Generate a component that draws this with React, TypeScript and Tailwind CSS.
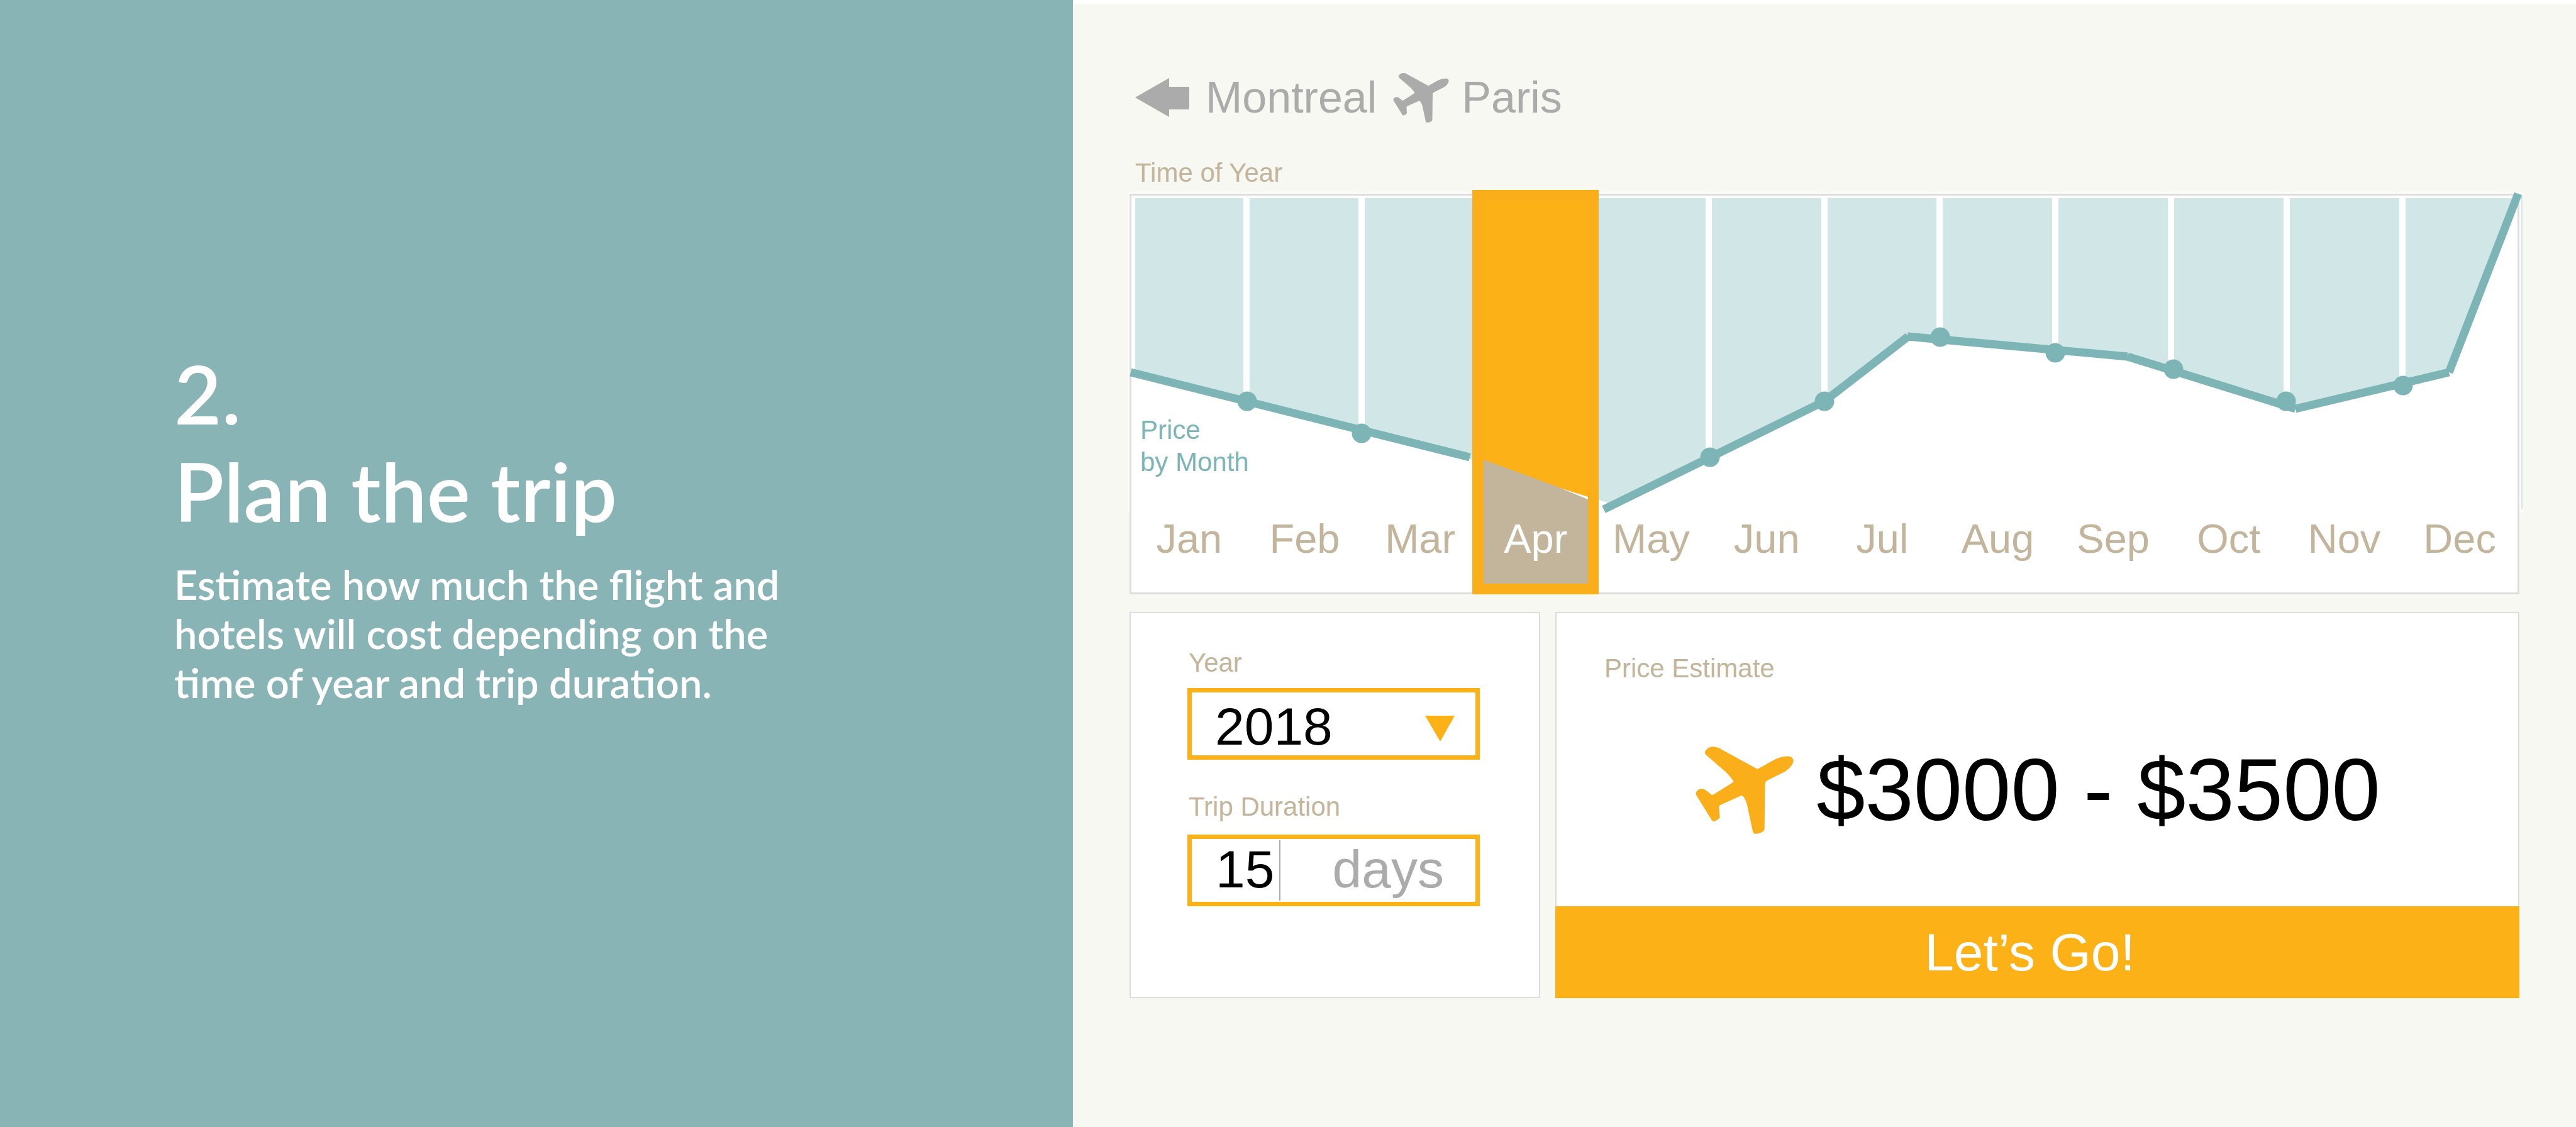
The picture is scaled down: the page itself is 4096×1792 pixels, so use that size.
const MONTHS = ["Jan", "Feb", "Mar", "Apr", "May", "Jun", "Jul", "Aug", "Sep", "Oct", "Nov", "Dec"];
const SELECTED = "Apr";

const DIVIDERS = [185, 368, 920, 1104, 1287, 1471, 1655, 1839, 2023];

const DOTS = [
  [186, 329],
  [368, 380],
  [922, 418],
  [1104, 329],
  [1288, 227],
  [1471, 252],
  [1659, 278],
  [1838, 329],
  [2024, 304],
];

const SEGMENTS = [
  "M1 283L540 418",
  "M753 501L1104 329L1237 226",
  "M1236 226L1586 258",
  "M1586 258L1853 341",
  "M1853 341L2097 283",
  "M2097 283L2207 -1",
];

function Plane({ className }: { className: string }) {
  return (
    <svg viewBox="65 63 543 485" className={className} fill="currentColor" aria-hidden="true">
      <path d="M116 97C118 85 135 66 155 64C170 62 183 66 195 72L400 184Q408 190 416 184L500 137C530 121 555 118 580 117C600 118 609 132 607 147C602 165 585 187 560 203L465 250Q450 258 450 272L447 520C446 532 432 541 410 546C392 549 385 545 382 535L350 385C343 362 335 345 326 337Q321 333 312 338L200 388Q194 391 195 400L199 455C198 464 185 472 167 478Q158 479 155 473L68 332C62 318 72 304 88 299C100 296 115 300 125 308L150 328Q157 335 166 328L270 263Q277 259 273 253C262 237 245 216 230 203L125 112Q116 104 116 97Z" />
    </svg>
  );
}

function PriceChart() {
  return (
    <svg viewBox="2 2 2204 509" className="block w-full overflow-visible" role="img" aria-label="Price by month">
      {/* backing sheet that peeks out either side of the frame */}
      <path d="M-3 -3H2215V506H2209V-1H-1V506H-3Z" fill="#ffffff" />
      <path d="M2213 1V501" stroke="#d1e7e7" strokeWidth="2" />
      {/* area above the price line */}
      <path
        d="M8 6H2204L2097 283L1853 341L1586 258L1236 226L1104 329L759 498V490L745 486L540 421L8 285Z"
        fill="#d1e7e7"
      />
      {DIVIDERS.map((x, i) => (
        <path key={x} d={`M${x} 4V${DOTS[i][1]}`} stroke="#ffffff" strokeWidth="10" />
      ))}
      {SEGMENTS.map((d) => (
        <path key={d} d={d} fill="none" stroke="#7db5b7" strokeWidth="13" />
      ))}
      {DOTS.map(([x, y]) => (
        <circle key={x} cx={x} cy={y} r="15.5" fill="#7db5b7" />
      ))}
      {/* selected month */}
      <rect x="544" y="-7" width="201" height="643" fill="#faaf1a" />
      <path d="M562 10H728V481L674 464L562 422Z" fill="#fcb216" />
      <path d="M674 464L728 481V486Z" fill="#ffffff" />
      <path d="M562 422L674 463L728 485V619H562Z" fill="#c2b59b" />
    </svg>
  );
}

export default function App() {
  return (
    <div className="flex min-h-screen bg-[#f6f8f1] font-['Liberation_Sans',Arial,sans-serif]">
      <section className="w-[41.65%] shrink-0 bg-[#89b4b6] pt-[548px] pl-[277px] font-[Lato,sans-serif] font-semibold text-white">
        <h1 className="text-[130px] leading-[155px]">
          2.
          <br />
          Plan the trip
        </h1>
        <p className="mt-8 text-[65px] leading-[78px]">
          Estimate how much the flight and
          <br />
          hotels will cost depending on the
          <br />
          time of year and trip duration.
        </p>
      </section>

      <main className="flex-1 border-t-[6px] border-white px-[90px] pt-[109px]">
        <header className="flex items-center gap-5 pl-[9px] text-[70px] leading-[80px] text-[#ababab]">
          <button type="button" aria-label="Back">
            <svg viewBox="0 0 86 62" className="block h-[62px] w-[86px]" fill="currentColor" aria-hidden="true">
              <path d="M0 31L54 0V14H86V50H54V62Z" />
            </svg>
          </button>
          <span className="ml-1.5">Montreal</span>
          <Plane className="ml-1.5 h-[79px] w-[89px]" />
          <span>Paris</span>
        </header>

        <h2 className="mt-14 pl-[9px] text-[42px] leading-[48px] text-[#c2b59b]">Time of Year</h2>

        <section className="relative mt-[9px] border-[3px] border-[#dddddd] bg-white">
          <PriceChart />
          <p className="absolute top-[347px] left-[14px] text-[42px] leading-[51px] text-[#7db5b7]">
            Price
            <br />
            by Month
          </p>
          <div className="relative grid grid-cols-12 pb-12 text-[65px] leading-[74px] text-[#c2b59b]">
            {MONTHS.map((m) => (
              <button
                key={m}
                type="button"
                aria-pressed={m === SELECTED}
                className={m === SELECTED ? "text-center text-white" : "text-center"}
              >
                {m}
              </button>
            ))}
          </div>
        </section>

        <div className="mt-7 grid grid-cols-[653fr_1533fr] gap-6">
          <form className="flex flex-col border-2 border-[#dddddd] bg-white pt-[55px] pr-[94px] pb-36 pl-[90px]">
            <label htmlFor="year" className="pl-0.5 text-[42px] leading-[48px] text-[#c2b59b]">
              Year
            </label>
            <div className="relative mt-4">
              <select
                id="year"
                defaultValue="2018"
                className="block h-[114px] w-full appearance-none rounded-none border-[7px] border-[#fcb216] bg-white pt-2 pl-[37px] text-[84px] leading-[90px] text-black"
              >
                <option>2018</option>
                <option>2019</option>
              </select>
              <svg
                viewBox="0 0 47 41"
                className="pointer-events-none absolute top-[44px] right-[40px] h-[41px] w-[47px]"
                fill="#fcb216"
                aria-hidden="true"
              >
                <path d="M0 0H47L24 41Z" />
              </svg>
            </div>
            <label htmlFor="duration" className="mt-[51px] pl-0.5 text-[42px] leading-[48px] text-[#c2b59b]">
              Trip Duration
            </label>
            <div className="mt-5 flex h-[114px] items-center border-[7px] border-[#fcb216] pr-[50px] text-[84px] leading-[96px]">
              <input
                id="duration"
                type="text"
                defaultValue="15"
                className="h-[96px] w-[139px] pb-1 pl-[38px] text-black"
              />
              <span className="h-[96px] w-[2px] bg-[#ababab]" />
              <span className="ml-auto pb-1 text-[#ababab]">days</span>
            </div>
          </form>

          <section className="flex flex-col">
            <div className="flex-1 border-2 border-b-0 border-[#dddddd] bg-white pt-16">
              <h2 className="pl-[76px] text-[42px] leading-[48px] text-[#c2b59b]">Price Estimate</h2>
              <div className="mt-[89px] flex items-center justify-center gap-9 pl-0.5">
                <Plane className="h-[139px] w-[156px] text-[#faaf1a]" />
                <span className="text-[139px] leading-[160px] text-black">$3000 - $3500</span>
              </div>
            </div>
            <button type="button" className="h-[146px] bg-[#fcb216] pr-6 text-[84px] leading-[96px] text-white">
              Let’s Go!
            </button>
          </section>
        </div>
      </main>
    </div>
  );
}
